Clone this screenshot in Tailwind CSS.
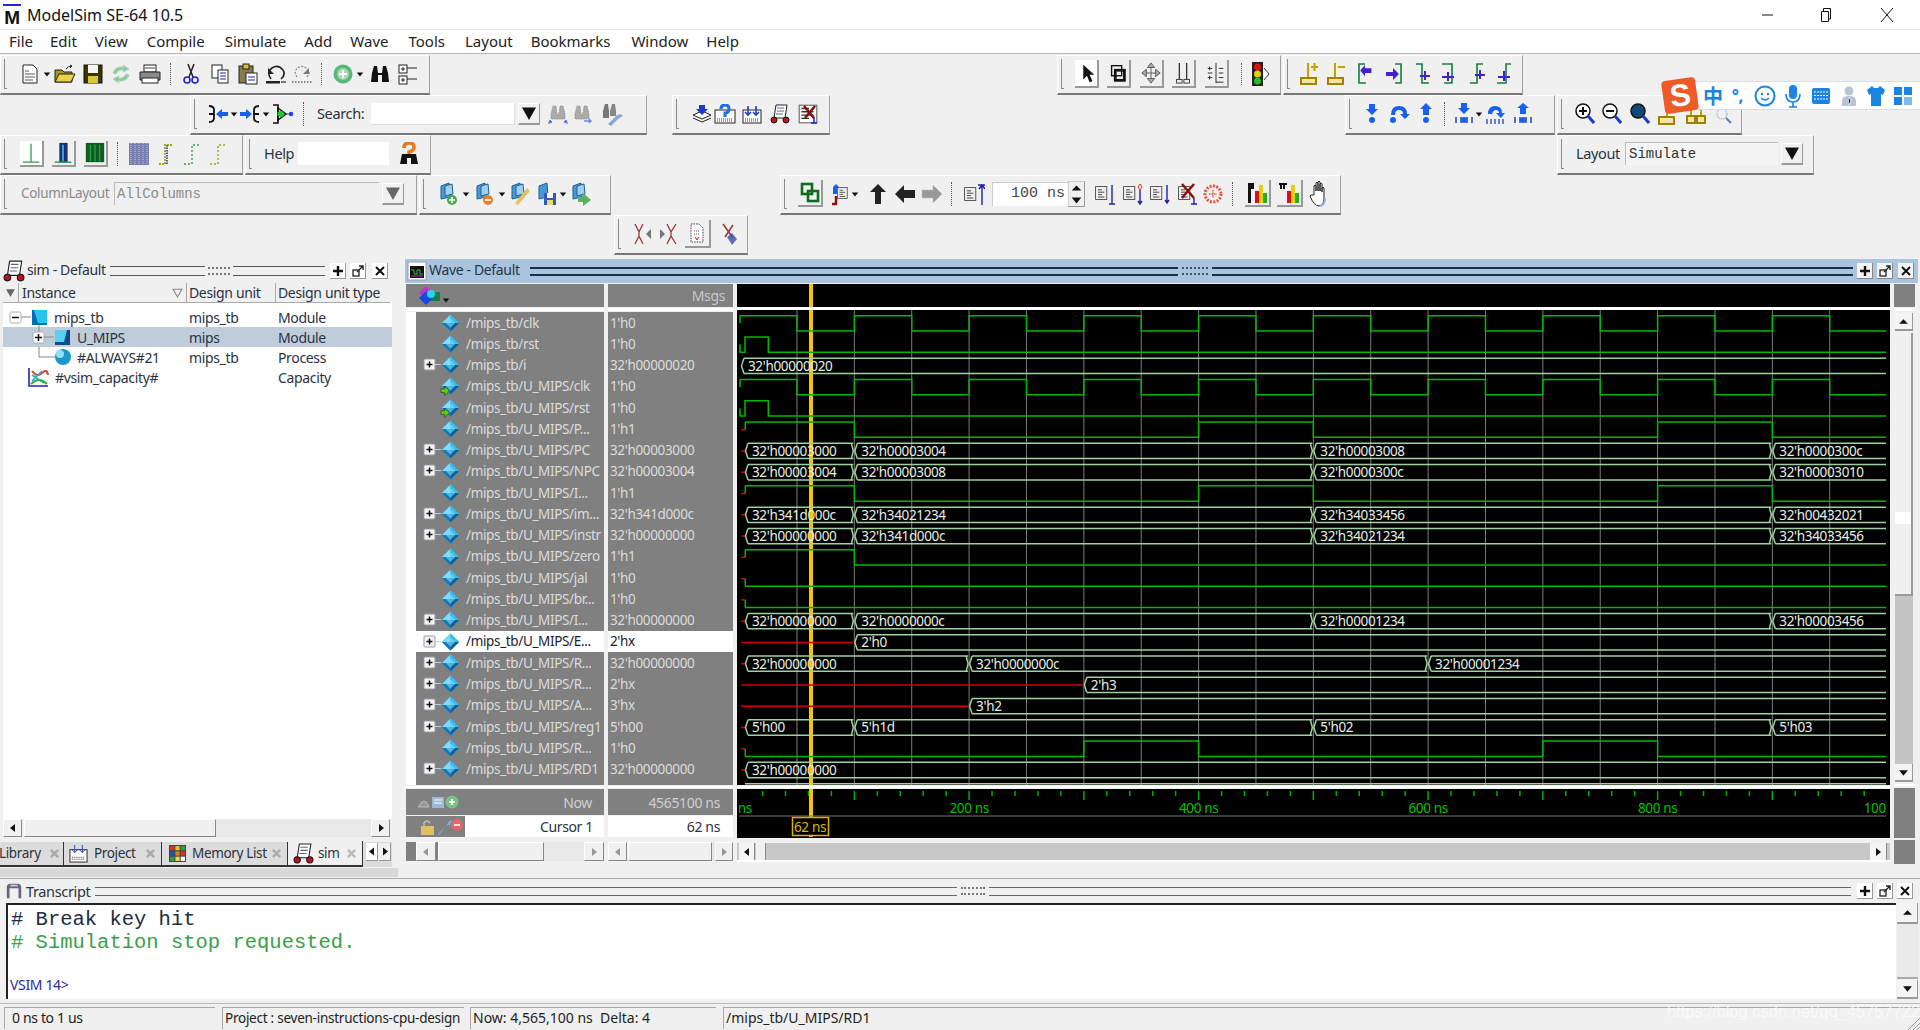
<!DOCTYPE html>
<html lang="en">
<head>
<meta charset="UTF-8" />
<title>ModelSim SE-64 10.5</title>
<script src="https://cdn.jsdelivr.net/npm/@tailwindcss/browser@4"></script>
</head>
<body class="w-[1920px] h-[1030px] overflow-hidden bg-[#f0f0f0] font-['Noto_Sans',sans-serif] text-[14px] tracking-[-0.35px] text-[#2b3240] relative">

<svg class="absolute w-0 h-0">
  <symbol id="dia" viewBox="0 0 20 20"><path d="M10 1 19 10 10 19 1 10z" fill="#1c9fdc"/><path d="M10 1 1 10h9z" fill="#7fdcf8"/><path d="M10 1 19 10h-9z" fill="#38bdf0"/><path d="M1 10 10 19v-9z" fill="#1478b8"/><path d="M19 10 10 19v-9z" fill="#0c5c9c"/><path d="M10 5 15 10 10 15 5 10z" fill="#7ee0fa" opacity=".6"/></symbol>
  <symbol id="ul" viewBox="0 0 10 10"><path d="M7 1 2 5l5 4z" fill="#111"/></symbol>
  <symbol id="ur" viewBox="0 0 10 10"><path d="M3 1l5 4-5 4z" fill="#111"/></symbol>
  <symbol id="uu" viewBox="0 0 10 10"><path d="M1 7 5 3l4 4z" fill="#111"/></symbol>
  <symbol id="ud" viewBox="0 0 10 10"><path d="M1 3h8L5 8z" fill="#111"/></symbol>
  <symbol id="plus" viewBox="0 0 12 12"><path d="M1 6h10M6 1v10" stroke="#111" stroke-width="2.4"/></symbol>
  <symbol id="float" viewBox="0 0 12 12"><rect x="1" y="5" width="6" height="6" fill="none" stroke="#222" stroke-width="1.3"/><path d="M5 7l6-6M7 1h4v4" fill="none" stroke="#222" stroke-width="1.4"/></symbol>
  <symbol id="close" viewBox="0 0 12 12"><path d="M2 2l8 8M10 2l-8 8" stroke="#111" stroke-width="2"/></symbol>
  <symbol id="wavedoc" viewBox="0 0 20 20"><rect x="2" y="2" width="16" height="16" fill="#fff" stroke="#666"/><path d="M4 5h7M4 8h11M4 11h11M4 14h7" stroke="#333" stroke-width="1.3"/></symbol>
  <symbol id="sim" viewBox="0 0 20 20"><path d="M6 1h11l-2 13H4z" fill="#fff" stroke="#222"/><path d="M7 4h7M7 7h7M6 10h7" stroke="#667"/><circle cx="4" cy="16" r="3" fill="#c01020" stroke="#111"/><circle cx="16" cy="16" r="3" fill="#c01020" stroke="#111"/></symbol>
  <symbol id="pane" viewBox="0 0 20 20"><path d="M2 18V6q0-4 4-4h8q4 0 4 4v12h-3V7H5v11z" fill="#667"/><path d="M6 4h8" stroke="#ccd" stroke-width="2"/></symbol>
  <symbol id="list" viewBox="0 0 20 20"><rect x="2" y="2" width="14" height="16" fill="#eee" stroke="#333"/><path d="M5 6h5M5 9h8M5 12h5M5 15h8" stroke="#222"/></symbol>
</svg>

<!-- title bar -->
<div class="h-[29px] bg-white flex items-center">
  <div class="ml-[3px] w-[18px] h-[22px] relative flex items-end justify-center font-bold text-[19px] leading-[17px] text-[#111] border-t-2 border-[#2222dd] font-['Liberation_Sans']">M</div>
  <span class="ml-[6px] text-[16px] tracking-normal text-[#111]">ModelSim SE-64 10.5</span>
  <div class="ml-auto flex items-center">
    <svg class="w-3 h-3" viewBox="0 0 12 12"><path d="M0 6h11" stroke="#111"/></svg>
    <svg class="ml-[46px] w-3 h-3.5" viewBox="0 0 12 14"><path d="M1.5 3.5h7v10h-7zM3.5 3V.5h7V11H9" fill="none" stroke="#111"/></svg>
    <svg class="ml-[48px] mr-[26px] w-3.5 h-3.5" viewBox="0 0 14 14"><path d="M1 0l12 14M13 0 1 14" stroke="#111"/></svg>
  </div>
</div>

<!-- menu bar -->
<div class="h-[25px] bg-white border-t border-[#e4e4e4] border-b border-b-[#b8b8b8] flex items-center text-[15px] tracking-normal leading-none text-[#222]">
  <span class="ml-[9px]">File</span><span class="ml-[17px]">Edit</span><span class="ml-[18px]">View</span><span class="ml-[19px]">Compile</span><span class="ml-[20px]">Simulate</span><span class="ml-[18px]">Add</span><span class="ml-[18px]">Wave</span><span class="ml-[20px]">Tools</span><span class="ml-[20px]">Layout</span><span class="ml-[18px]">Bookmarks</span><span class="ml-[21px]">Window</span><span class="ml-[18px]">Help</span>
</div>

<!-- toolbars -->
<div class="h-[202px] flex flex-col pt-[1px]">
  <!-- row 1 -->
  <div class="h-[40px] flex">
    <div class="w-[430px] flex items-center bg-[#f0f0f0] border border-white border-r-[#a0a0a0] border-b-[#777] border-b-2 pb-[2px]">
      <div class="ml-[3px] w-[3px] h-[30px] border-l border-b border-[#8a8a8a]"></div>
      <svg class="ml-[13px] w-5 h-5" viewBox="0 0 20 20"><path d="M3 1h10l4 4v14H3z" fill="#fff" stroke="#222"/><path d="M5 7h4M5 10h10M5 13h10M5 16h8" stroke="#556"/></svg>
      <svg class="ml-[3px] w-2 h-2" viewBox="0 0 10 10"><use href="#ud"/></svg>
      <svg class="ml-[3px] w-[22px] h-5" viewBox="0 0 22 20"><path d="M1 6h7l2 2h8v10H1z" fill="#a89818" stroke="#222"/><path d="M5 10h16l-4 8H1z" fill="#ecd048" stroke="#222"/><path d="M12 5q2-3 6-3m0 0-2-1m2 1-2 2" fill="none" stroke="#222"/></svg>
      <svg class="ml-[7px] w-5 h-5" viewBox="0 0 20 20"><rect x="1" y="1" width="18" height="18" fill="#3c3400" stroke="#111"/><rect x="5" y="1" width="10" height="8" fill="#f4f4f4"/><rect x="5" y="12" width="10" height="7" fill="#d8c830"/></svg>
      <svg class="ml-[7px] w-[22px] h-5" viewBox="0 0 22 20"><path d="M3 9q2-7 11-6l-1-2 6 4-6 3 1-2q-6-1-8 4z" fill="#8cc898" stroke="#a8d8b0"/><path d="M19 11q-2 7-11 6l1 2-6-4 6-3-1 2q6 1 8-4z" fill="#8cc898" stroke="#a8d8b0"/></svg>
      <svg class="ml-[7px] w-[22px] h-5" viewBox="0 0 22 20"><rect x="5" y="1" width="12" height="7" fill="#fff" stroke="#222"/><path d="M1 8h20v8H1z" fill="#8a8a8a" stroke="#222"/><rect x="3" y="14" width="16" height="5" fill="#fff" stroke="#222"/><path d="M6 4h10" stroke="#445"/></svg>
      <div class="ml-[9px] h-[22px] border-l border-dotted border-[#555]"></div>
      <svg class="ml-[12px] w-4 h-[22px]" viewBox="0 0 16 22"><path d="M5 1l5 13M11 1 6 14" stroke="#222" stroke-width="1.5"/><circle cx="4" cy="17" r="3" fill="none" stroke="#2222cc" stroke-width="1.6"/><circle cx="12" cy="17" r="3" fill="none" stroke="#2222cc" stroke-width="1.6"/></svg>
      <svg class="ml-[11px] w-5 h-5" viewBox="0 0 20 20"><rect x="2" y="1" width="10" height="13" fill="#fff" stroke="#222"/><rect x="8" y="6" width="10" height="13" fill="#fff" stroke="#223"/><path d="M10 9h6M10 12h6M10 15h6" stroke="#2222aa"/></svg>
      <svg class="ml-[7px] w-[22px] h-[22px]" viewBox="0 0 22 22"><rect x="2" y="3" width="14" height="17" fill="#8a7a50" stroke="#222"/><rect x="6" y="1" width="6" height="5" fill="#d8c040" stroke="#222"/><rect x="9" y="10" width="11" height="11" fill="#fff" stroke="#223"/><path d="M11 14h7M11 17h7" stroke="#2222aa"/></svg>
      <svg class="ml-[6px] w-[22px] h-5" viewBox="0 0 22 20"><path d="M6 15Q1 8 7 4t11 2q3 5-2 9" fill="none" stroke="#222" stroke-width="1.6"/><path d="M3 4v6h6z" fill="#222"/><rect x="1" y="17" width="14" height="2.5" fill="#222"/><path d="M16 18h5" stroke="#777" stroke-width="2"/></svg>
      <svg class="ml-[4px] w-[22px] h-5" viewBox="0 0 22 20"><path d="M16 13Q21 8 15 4T5 6q-2 3 1 7" fill="none" stroke="#888" stroke-width="1.2" stroke-dasharray="2 1.5"/><path d="M18 4v6h-6z" fill="#777"/><path d="M1 18h20" stroke="#888" stroke-width="2" stroke-dasharray="1.5 1.5"/></svg>
      <div class="ml-[8px] h-[22px] border-l border-dotted border-[#555]"></div>
      <svg class="ml-[11px] w-5 h-[22px]" viewBox="0 0 20 22"><circle cx="10" cy="11" r="9.5" fill="#58b878"/><circle cx="10" cy="11" r="6" fill="#a8d8b4"/><path d="M6 11h8M10 7v8" stroke="#fff" stroke-width="2"/></svg>
      <svg class="ml-[3px] w-2 h-2" viewBox="0 0 10 10"><use href="#ud"/></svg>
      <svg class="ml-[6px] w-5 h-5" viewBox="0 0 20 20"><path d="M2 9l2-7h3l1 7h4l1-7h3l2 7 1 9h-7V11H8v7H1z" fill="#111"/></svg>
      <svg class="ml-[8px] w-5 h-[22px]" viewBox="0 0 20 22"><rect x="1" y="2" width="8" height="8" fill="#fff" stroke="#222"/><rect x="1" y="13" width="8" height="8" fill="#fff" stroke="#222"/><path d="M3 6h4M5 4v4M3 17h4M5 15v4M9 5h10M9 16h10" stroke="#222"/></svg>
    </div>
    <div class="ml-[627px] w-[224px] flex items-center border border-white border-r-[#a0a0a0] border-b-[#777] border-b-2 pb-[2px]">
      <div class="ml-[3px] w-[3px] h-[30px] border-l border-b border-[#8a8a8a]"></div>
      <svg class="ml-[11px] w-6 h-7 bg-white border-r-2 border-b-2 border-[#999]" viewBox="0 0 24 28"><path d="M9 5v16l4-4 3 7 3-1-3-7h5z" fill="#111"/></svg>
      <svg class="ml-[8px] w-6 h-7 border-r-2 border-b-2 border-[#999]" viewBox="0 0 24 28"><rect x="5" y="6" width="11" height="11" fill="none" stroke="#111" stroke-width="1.5"/><rect x="9" y="11" width="10" height="11" fill="none" stroke="#111" stroke-width="3"/></svg>
      <svg class="ml-[9px] w-6 h-7 border-r-2 border-b-2 border-[#999]" viewBox="0 0 24 28"><path d="M12 3l4 5h-8zM12 25l4-5H8zM2 14l5-4v8zM22 14l-5-4v8zM12 8v12M7 14h10" fill="#aaa" stroke="#555"/></svg>
      <svg class="ml-[8px] w-6 h-7 border-r-2 border-b-2 border-[#999]" viewBox="0 0 24 28"><path d="M8 3v18M16 3v18" stroke="#333" stroke-width="1.4"/><rect x="5" y="21" width="6" height="4" fill="none" stroke="#333"/><rect x="13" y="21" width="6" height="4" fill="none" stroke="#333"/></svg>
      <svg class="ml-[9px] w-6 h-7 border-r-2 border-b-2 border-[#999]" viewBox="0 0 24 28"><path d="M3 9h5M3 14h5M3 19h5M5 7v4M5 17v4M15 9h5M15 14h5M15 19h5M12 3v22M12 24h8" stroke="#222"/></svg>
      <div class="ml-[12px] h-[22px] border-l border-dotted border-[#555]"></div>
      <svg class="ml-[8px] w-[22px] h-[26px]" viewBox="0 0 22 26"><rect x="2" y="1" width="11" height="24" fill="#222"/><circle cx="7.5" cy="6" r="3.5" fill="#e01010"/><circle cx="7.5" cy="13" r="3.5" fill="#e0d010"/><circle cx="7.5" cy="20" r="3.5" fill="#20c020"/><path d="M14 7l5 6-5 6" fill="#fff" stroke="#333"/></svg>
    </div>
    <div class="ml-[2px] w-[240px] flex items-center border border-white border-r-[#a0a0a0] border-b-[#777] border-b-2 pb-[2px]">
      <div class="ml-[3px] w-[3px] h-[30px] border-l border-b border-[#8a8a8a]"></div>
      <svg class="ml-[9px] w-5 h-6" viewBox="0 0 20 24"><path d="M9 1v16" stroke="#c8a000" stroke-width="2"/><path d="M12 5h7" stroke="#c8a000" stroke-width="2"/><path d="M15.5 1v8" stroke="#c8a000" stroke-width="2"/><rect x="2" y="16" width="15" height="6" fill="#f0e8a0" stroke="#a08000" stroke-width="2"/></svg>
      <svg class="ml-[7px] w-5 h-6" viewBox="0 0 20 24"><path d="M9 1v16" stroke="#c8a000" stroke-width="2"/><path d="M12 5h7" stroke="#c8a000" stroke-width="2"/><rect x="2" y="16" width="15" height="6" fill="#f0e8a0" stroke="#a08000" stroke-width="2"/></svg>
      <svg class="ml-[9px] w-5 h-6" viewBox="0 0 20 24"><path d="M10 2H4v19h7" fill="none" stroke="#108040" stroke-width="1.6"/><path d="M18 9H10V5l-6 7 6 7v-4h8z" transform="translate(2 -1) scale(.8)" fill="#4420d0"/></svg>
      <svg class="ml-[9px] w-5 h-6" viewBox="0 0 20 24"><path d="M11 2h6v19h-6" fill="none" stroke="#108040" stroke-width="1.6"/><path d="M2 10h7V6l6 6-6 6v-4H2z" fill="#4420d0"/></svg>
      <svg class="ml-[9px] w-5 h-6" viewBox="0 0 20 24"><path d="M3 2h6v19h7" fill="none" stroke="#108040" stroke-width="1.6"/><path d="M7 14h10M12 9v9" stroke="#4420d0" stroke-width="2"/></svg>
      <svg class="ml-[6px] w-5 h-6" viewBox="0 0 20 24"><path d="M3 2h10v19H5" fill="none" stroke="#108040" stroke-width="1.6"/><path d="M3 15h12M9 10v9" stroke="#4420d0" stroke-width="2"/></svg>
      <svg class="ml-[8px] w-5 h-6" viewBox="0 0 20 24"><path d="M16 2h-6v19H3" fill="none" stroke="#108040" stroke-width="1.6"/><path d="M8 13h10M13 8v9" stroke="#4420d0" stroke-width="2"/></svg>
      <svg class="ml-[7px] w-5 h-6" viewBox="0 0 20 24"><path d="M17 2h-5v19H3" fill="none" stroke="#108040" stroke-width="1.6"/><path d="M4 15h12M10 9v10" stroke="#4420d0" stroke-width="2"/></svg>
    </div>
  </div>
  <!-- row 2 -->
  <div class="h-[40px] flex">
    <div class="ml-[190px] w-[457px] flex items-center border border-white border-r-[#a0a0a0] border-b-[#777] border-b-2 pb-[2px]">
      <div class="ml-[3px] w-[3px] h-[30px] border-l border-b border-[#8a8a8a]"></div>
      <svg class="ml-[11px] w-5 h-5" viewBox="0 0 20 20"><path d="M1 2q5 0 5 4v8q0 4-5 4M6 10h-5" fill="none" stroke="#111" stroke-width="1.8"/><path d="M8 10l6-5v3h6v4h-6v3z" fill="#1a60f0"/></svg>
      <svg class="ml-[2px] w-2 h-2" viewBox="0 0 10 10"><use href="#ud"/></svg>
      <svg class="ml-[2px] w-5 h-5" viewBox="0 0 20 20"><path d="M19 2q-5 0-5 4v8q0 4 5 4M14 10h5" fill="none" stroke="#111" stroke-width="1.8"/><path d="M12 10l-6-5v3H0v4h6v3z" fill="#1a60f0"/></svg>
      <svg class="ml-[2px] w-2 h-2" viewBox="0 0 10 10"><use href="#ud"/></svg>
      <svg class="ml-[2px] w-[22px] h-[22px]" viewBox="0 0 22 22"><path d="M1 2h5v7M1 20h5v-7" fill="none" stroke="#111" stroke-width="1.6"/><path d="M6 5l8 6-8 6z" fill="none" stroke="#111" stroke-width="1.5"/><circle cx="9" cy="11" r="3" fill="#10d030"/><circle cx="19" cy="11" r="2.2" fill="#2040e0"/><path d="M14 11h3" stroke="#2040e0"/></svg>
      <div class="ml-[9px] h-[24px] border-l border-dotted border-[#555]"></div>
      <span class="ml-[13px] w-[47px] text-[14.5px] leading-none whitespace-nowrap">Search:</span>
      <div class="ml-[7px] w-[144px] h-[22px] bg-white border-b border-r border-[#ddd]"></div>
      <div class="ml-[3px] w-[22px] h-[22px] border border-white border-r-[#999] border-b-2 border-b-[#999] flex items-center justify-center"><svg class="w-[16px] h-[14px]" viewBox="0 0 10 10"><path d="M0 1h10L5 10z" fill="#111"/></svg></div>
      <svg class="ml-[8px] w-5 h-[22px]" viewBox="0 0 20 22"><path d="M3 11l2-8h3l1 8h2l1-8h3l2 8v5H3z" fill="#aaa" stroke="#999" stroke-dasharray="1.5 1"/><path d="M2 17l-1 3 3-1M18 17l1 3-3-1" stroke="#6888e8" stroke-width="1.5"/></svg>
      <svg class="ml-[4px] w-5 h-[22px]" viewBox="0 0 20 22"><path d="M3 11l2-8h3l1 8h2l1-8h3l2 8v5H3z" fill="#aaa" stroke="#999" stroke-dasharray="1.5 1"/><path d="M12 18h7m-2-2 2 2-2 2" fill="none" stroke="#6888e8" stroke-width="1.5"/></svg>
      <svg class="ml-[8px] w-[24px] h-[24px]" viewBox="0 0 24 24"><path d="M3 9l2-7h3l1 7v7H3z" fill="#777"/><path d="M10 9l2-7h3l1 7v5h-6z" fill="#888"/><path d="M8 22l9-9 4-1 2 2-5 3-7 7z" fill="#90a8d0"/></svg>
    </div>
    <div class="ml-[25px] w-[158px] flex items-center border border-white border-r-[#a0a0a0] border-b-[#777] border-b-2 pb-[2px]">
      <div class="ml-[3px] w-[3px] h-[30px] border-l border-b border-[#8a8a8a]"></div>
      <svg class="ml-[13px] w-5 h-5" viewBox="0 0 20 20"><path d="M1 11 10 7l9 4-9 4z" fill="#fff" stroke="#222"/><path d="M1 14l9 4 9-4" fill="none" stroke="#222"/><path d="M7 1h6v4h3l-6 6-6-6h3z" fill="#1a3cc0"/></svg>
      <svg class="ml-[2px] w-[22px] h-5" viewBox="0 0 22 20"><rect x="1" y="6" width="20" height="13" fill="#fff" stroke="#222"/><path d="M3 15h16M3 17h16" stroke="#333" stroke-dasharray="1 1"/><path d="M7 5q0-4 4-4t4 4-4 4v4" fill="none" stroke="#1a70e8" stroke-width="3"/></svg>
      <svg class="ml-[6px] w-5 h-5" viewBox="0 0 20 20"><rect x="1" y="6" width="18" height="13" fill="#fff" stroke="#222"/><path d="M3 15h14M3 17h14" stroke="#333" stroke-dasharray="1 1"/><path d="M6 2v9m-3-3 3 3 3-3M14 2v9m-3-3 3 3 3-3" fill="none" stroke="#2040c0" stroke-width="1.6"/></svg>
      <svg class="ml-[7px] w-[22px] h-5" viewBox="0 0 22 20"><use href="#sim"/></svg>
      <svg class="ml-[6px] w-[22px] h-[22px]" viewBox="0 0 22 22"><use href="#wavedoc"/><path d="M7 3l10 12M18 3 8 15" stroke="#8a1010" stroke-width="2.6"/><path d="M17 14v6m-3 0h6" stroke="#2020c0" stroke-width="1.5"/></svg>
    </div>
    <div class="ml-[515px] w-[210px] flex items-center border border-white border-r-[#a0a0a0] border-b-[#777] border-b-2 pb-[2px]">
      <div class="ml-[3px] w-[3px] h-[30px] border-l border-b border-[#8a8a8a]"></div>
      <svg class="ml-[12px] w-4 h-[22px]" viewBox="0 0 16 22"><path d="M5 1h6v5h3l-6 6-6-6h3z" fill="#1a60f0"/><circle cx="8" cy="17" r="3" fill="#1a60f0"/></svg>
      <svg class="ml-[8px] w-[24px] h-[22px]" viewBox="0 0 24 22"><path d="M3 12q0-9 8-9t8 8h3l-5 5-5-5h3q0-4-4-4t-4 5z" fill="#1a60f0"/><circle cx="5" cy="17" r="3" fill="#1a60f0"/></svg>
      <svg class="ml-[6px] w-4 h-[22px]" viewBox="0 0 16 22"><path d="M5 12h6V6h3L8 0 2 6h3z" fill="#1a60f0"/><circle cx="8" cy="17" r="3" fill="#1a60f0"/></svg>
      <div class="ml-[10px] h-[24px] border-l border-dotted border-[#555]"></div>
      <svg class="ml-[9px] w-[20px] h-[22px]" viewBox="0 0 20 22"><path d="M7 0h6v5h3l-6 6-6-6h3z" fill="#1a60f0"/><path d="M2 14v6M7 14v6M13 14v6M18 14v6" stroke="#2040c0" stroke-width="1.5"/><circle cx="10" cy="17" r="3" fill="#1a60f0"/></svg>
      <svg class="ml-[1px] w-2 h-2" viewBox="0 0 10 10"><use href="#ud"/></svg>
      <svg class="ml-[2px] w-[22px] h-[22px]" viewBox="0 0 22 22"><path d="M3 11q0-8 7-8t7 7h3l-4 5-5-5h3q0-3-3-3t-4 4z" fill="#1a60f0"/><path d="M2 16v5M6 16v5M10 16v5M14 16v5M18 16v5" stroke="#2040c0" stroke-width="1.3"/></svg>
      <svg class="ml-[6px] w-[20px] h-[22px]" viewBox="0 0 20 22"><path d="M7 11h6V5h3l-6-5-6 5h3z" fill="#1a60f0"/><path d="M2 14v6M7 14v6M13 14v6M18 14v6" stroke="#2040c0" stroke-width="1.5"/><circle cx="10" cy="17" r="3" fill="#1a60f0"/></svg>
    </div>
    <div class="ml-[2px] w-[185px] flex items-center border border-white border-r-[#a0a0a0] border-b-[#777] border-b-2 pb-[2px]">
      <div class="ml-[3px] w-[3px] h-[30px] border-l border-b border-[#8a8a8a]"></div>
      <svg class="ml-[11px] w-5 h-[22px]" viewBox="0 0 20 22"><circle cx="8" cy="8" r="7" fill="#fff" stroke="#111" stroke-width="1.5"/><path d="M4 8h8M8 4v8" stroke="#111" stroke-width="2"/><path d="M13 13l6 7" stroke="#1c3cc8" stroke-width="3"/></svg>
      <svg class="ml-[7px] w-5 h-[22px]" viewBox="0 0 20 22"><circle cx="8" cy="8" r="7" fill="#fff" stroke="#111" stroke-width="1.5"/><path d="M4 8h8" stroke="#111" stroke-width="2"/><path d="M13 13l6 7" stroke="#1c3cc8" stroke-width="3"/></svg>
      <svg class="ml-[8px] w-5 h-[22px]" viewBox="0 0 20 22"><circle cx="8" cy="8" r="7" fill="#104878" stroke="#111" stroke-width="1.5"/><path d="M13 13l6 7" stroke="#1c3cc8" stroke-width="3"/></svg>
      <svg class="ml-[7px] w-5 h-[24px]" viewBox="0 0 20 24"><path d="M10 1v15" stroke="#c8a000" stroke-width="2"/><rect x="2" y="15" width="15" height="7" fill="#f0e8a0" stroke="#a08000" stroke-width="2"/></svg>
      <svg class="ml-[9px] w-5 h-[24px]" viewBox="0 0 20 24"><path d="M5 8v6M15 8v6" stroke="#c8a000" stroke-width="2"/><rect x="1" y="14" width="8" height="7" fill="#f0e8a0" stroke="#a08000" stroke-width="2"/><rect x="11" y="14" width="8" height="7" fill="#f0e8a0" stroke="#a08000" stroke-width="2"/></svg>
      <svg class="ml-[7px] w-5 h-[24px]" viewBox="0 0 20 24"><circle cx="9" cy="12" r="5" fill="none" stroke="#8898c0" stroke-dasharray="1.500 1"/><path d="M13 16l5 5" stroke="#6078c0" stroke-width="2"/></svg>
    </div>
  </div>
  <!-- row 3 -->
  <div class="h-[40px] flex">
    <div class="w-[243px] flex items-center border border-white border-r-[#a0a0a0] border-b-[#777] border-b-2 pb-[2px]">
      <div class="ml-[3px] w-[3px] h-[30px] border-l border-b border-[#8a8a8a]"></div>
      <svg class="ml-[13px] w-6 h-[26px] bg-white border-r-2 border-b-2 border-[#999]" viewBox="0 0 24 26"><path d="M12 3v20M3 23h18" stroke="#2c9c50" stroke-width="1.4"/></svg>
      <svg class="ml-[8px] w-6 h-[26px] border-r-2 border-b-2 border-[#999]" viewBox="0 0 24 26"><rect x="8" y="2" width="9" height="21" fill="#14307c"/><rect x="11" y="4" width="2" height="18" fill="#48a8c0"/><path d="M3 23h18" stroke="#2c9c50" stroke-width="1.6"/></svg>
      <svg class="ml-[8px] w-6 h-[26px] border-r-2 border-b-2 border-[#999]" viewBox="0 0 24 26"><rect x="2" y="2" width="20" height="21" fill="#0e5c20"/><path d="M7 4v18M12 4v18M17 4v18" stroke="#28a048" stroke-width="1.5"/></svg>
      <div class="ml-[9px] h-[24px] border-l border-dotted border-[#555]"></div>
      <svg class="ml-[10px] w-[22px] h-[24px]" viewBox="0 0 22 24"><rect x="1" y="1" width="20" height="22" fill="#5058a0" opacity=".75"/><path d="M3 1v22M7 1v22M11 1v22M15 1v22M19 1v22" stroke="#c8cce0" stroke-dasharray="1 1"/></svg>
      <svg class="ml-[7px] w-5 h-[24px]" viewBox="0 0 20 24"><path d="M2 22h6V3h8" fill="none" stroke="#a0a818" stroke-width="1.8" stroke-dasharray="2 1"/><path d="M10 3v19" stroke="#5058a0" stroke-width="2" stroke-dasharray="1.5 1"/></svg>
      <svg class="ml-[5px] w-5 h-[24px]" viewBox="0 0 20 24"><path d="M2 22h8V3h8" fill="none" stroke="#38a050" stroke-width="1.4" stroke-dasharray="2 2"/></svg>
      <svg class="ml-[6px] w-5 h-[24px]" viewBox="0 0 20 24"><path d="M2 22h8V3h8" fill="none" stroke="#90a818" stroke-width="1.4" stroke-dasharray="2 2"/></svg>
    </div>
    <div class="ml-[2px] w-[186px] flex items-center border border-white border-r-[#a0a0a0] border-b-[#777] border-b-2 pb-[2px]">
      <div class="ml-[3px] w-[3px] h-[30px] border-l border-b border-[#8a8a8a]"></div>
      <span class="ml-[12px] w-[27px] text-[14.5px] leading-none">Help</span>
      <div class="ml-[7px] w-[91px] h-[23px] bg-white"></div>
      <svg class="ml-[9px] w-[22px] h-[24px]" viewBox="0 0 22 24"><path d="M2 22l2-10h14l2 10h-7v-6H9v6z" fill="#111"/><path d="M6 6q0-5 5-5t5 4-5 5v2" fill="none" stroke="#e87818" stroke-width="3.5"/></svg>
    </div>
    <div class="ml-[1126px] w-[257px] flex items-center border border-white border-r-[#a0a0a0] border-b-[#777] border-b-2 pb-[2px]">
      <div class="ml-[3px] w-[3px] h-[30px] border-l border-b border-[#8a8a8a]"></div>
      <span class="ml-[12px] w-[43px] text-[14.5px] leading-none">Layout</span>
      <div class="ml-[6px] w-[153px] h-[23px] bg-[#f4f4f4] border-t border-l border-[#bbb] flex items-center pl-[3px] font-['Liberation_Mono'] text-[14px] tracking-normal text-[#333]">Simulate</div>
      <div class="ml-[3px] w-[22px] h-[22px] border border-white border-r-[#999] border-b-2 border-b-[#999] flex items-center justify-center"><svg class="w-[16px] h-[14px]" viewBox="0 0 10 10"><path d="M0 1h10L5 10z" fill="#111"/></svg></div>
    </div>
  </div>
  <!-- row 4 -->
  <div class="h-[40px] flex">
    <div class="w-[417px] flex items-center border border-white border-r-[#a0a0a0] border-b-[#777] border-b-2 pb-[2px]">
      <div class="ml-[3px] w-[3px] h-[30px] border-l border-b border-[#8a8a8a]"></div>
      <span class="ml-[14px] w-[88px] text-[13.500px] leading-none text-[#8a8a8a] whitespace-nowrap">ColumnLayout</span>
      <div class="ml-[5px] w-[265px] h-[23px] border-t border-l border-[#bbb] flex items-center pl-[2px] font-['Liberation_Mono'] text-[14px] tracking-normal text-[#8a8a8a]">AllColumns</div>
      <div class="ml-[3px] w-[22px] h-[22px] border border-white border-r-[#999] border-b-2 border-b-[#999] flex items-center justify-center"><svg class="w-[16px] h-[14px]" viewBox="0 0 10 10"><path d="M0 1h10L5 10z" fill="#666"/></svg></div>
    </div>
    <div class="ml-[2px] w-[192px] flex items-center border border-white border-r-[#a0a0a0] border-b-[#777] border-b-2 pb-[2px]">
      <div class="ml-[3px] w-[3px] h-[30px] border-l border-b border-[#8a8a8a]"></div>
      <svg class="ml-[12px] w-[22px] h-[24px]" viewBox="0 0 22 24"><path d="M3 4l8-3 1 14-9 2z" fill="#4898d8" stroke="#206090"/><path d="M7 4l7-2 1 10-8 2z" fill="#a0d0f0" stroke="#206090"/><circle cx="14" cy="18" r="5" fill="#48a850"/><path d="M11 18h6M14 15v6" stroke="#fff" stroke-width="1.6"/></svg>
      <svg class="ml-[2px] w-2 h-2" viewBox="0 0 10 10"><use href="#ud"/></svg>
      <svg class="ml-[4px] w-[22px] h-[24px]" viewBox="0 0 22 24"><path d="M3 4l8-3 1 14-9 2z" fill="#4898d8" stroke="#206090"/><path d="M7 4l7-2 1 10-8 2z" fill="#a0d0f0" stroke="#206090"/><circle cx="14" cy="18" r="5" fill="#e88030"/><path d="M11 18h6" stroke="#fff" stroke-width="1.6"/></svg>
      <svg class="ml-[2px] w-2 h-2" viewBox="0 0 10 10"><use href="#ud"/></svg>
      <svg class="ml-[3px] w-[22px] h-[24px]" viewBox="0 0 22 24"><path d="M3 4l8-3 1 14-9 2z" fill="#4898d8" stroke="#206090"/><path d="M7 4l7-2 1 10-8 2z" fill="#a0d0f0" stroke="#206090"/><path d="M6 21 18 6l3 3L9 23z" fill="#e8c060"/></svg>
      <svg class="ml-[5px] w-[22px] h-[24px]" viewBox="0 0 22 24"><path d="M3 4l8-3 1 14-9 2z" fill="#4898d8" stroke="#206090"/><rect x="8" y="11" width="12" height="12" fill="#3058c0"/><rect x="11" y="11" width="6" height="5" fill="#fff"/><rect x="11" y="18" width="6" height="5" fill="#e8e060"/></svg>
      <svg class="ml-[1px] w-2 h-2" viewBox="0 0 10 10"><use href="#ud"/></svg>
      <svg class="ml-[3px] w-[22px] h-[24px]" viewBox="0 0 22 24"><path d="M3 4l8-3 1 14-9 2z" fill="#4898d8" stroke="#206090"/><path d="M7 4l7-2 1 10-8 2z" fill="#a0d0f0" stroke="#206090"/><path d="M8 15h5v-4l8 7-8 6v-4H8z" fill="#58b060"/></svg>
    </div>
    <div class="ml-[169px] w-[561px] flex items-center border border-white border-r-[#a0a0a0] border-b-[#777] border-b-2 pb-[2px]">
      <div class="ml-[3px] w-[3px] h-[30px] border-l border-b border-[#8a8a8a]"></div>
      <div class="ml-[11px] w-[25px] h-[27px] border-r-2 border-b-2 border-[#999] flex items-center justify-center"><svg class="w-[20px] h-[22px]" viewBox="0 0 20 22"><rect x="2" y="2" width="10" height="10" fill="none" stroke="#0e6c1c" stroke-width="2.6"/><rect x="8" y="9" width="10" height="10" fill="none" stroke="#0e6c1c" stroke-width="2.6"/></svg></div>
      <svg class="ml-[7px] w-[20px] h-[24px]" viewBox="0 0 20 24"><path d="M3 12V5l3-3 3 3H7v7" fill="#1a60f0"/><path d="M6 14v8H2" stroke="#901010" stroke-width="2.4" fill="none"/><use href="#list" x="6" y="2" width="14" height="18"/></svg>
      <svg class="ml-[1px] w-2 h-2" viewBox="0 0 10 10"><use href="#ud"/></svg>
      <svg class="ml-[9px] w-[20px] h-[24px]" viewBox="0 0 20 24"><path d="M7 22V10H2l8-8 8 8h-5v12z" fill="#222"/></svg>
      <svg class="ml-[6px] w-[22px] h-[22px]" viewBox="0 0 22 22"><path d="M21 7H10V2L1 11l9 9v-5h11z" fill="#222"/></svg>
      <svg class="ml-[5px] w-[22px] h-[22px]" viewBox="0 0 22 22"><path d="M1 7h11V2l9 9-9 9v-5H1z" fill="#999" stroke="#bbb" stroke-dasharray="1 1"/></svg>
      <div class="ml-[8px] h-[24px] border-l border-dotted border-[#555]"></div>
      <svg class="ml-[11px] w-[22px] h-[24px]" viewBox="0 0 22 24"><use href="#list" width="16" height="20" y="2"/><path d="M19 23V3m-3 4 3-4 3 4M15 3h8" fill="none" stroke="#2020a8" stroke-width="1.4"/></svg>
      <div class="ml-[7px] w-[76px] h-[24px] bg-white border-t border-l border-[#ccc] flex items-center justify-end pr-[3px] font-['Liberation_Mono'] text-[15px] tracking-normal text-[#444]">100 ns</div>
      <div class="w-[17px] h-[26px] flex flex-col border border-[#ccc] border-r-[#999] border-b-[#999]"><svg class="w-full h-[12px]" viewBox="0 0 10 10"><use href="#uu"/></svg><svg class="w-full h-[12px]" viewBox="0 0 10 10"><use href="#ud"/></svg></div>
      <svg class="ml-[9px] w-[22px] h-[24px]" viewBox="0 0 22 24"><use href="#list" width="16" height="20" y="1"/><path d="M18 3v19m-3 0h6" stroke="#2020a8" stroke-width="1.4"/></svg>
      <svg class="ml-[6px] w-[22px] h-[24px]" viewBox="0 0 22 24"><use href="#list" width="16" height="20" y="1"/><path d="M18 8v14m-2-3 2 3 2-3" fill="none" stroke="#2020a8" stroke-width="1.4"/><path d="M18 2l2 3-2 3-2-3z" fill="none" stroke="#e03030"/></svg>
      <svg class="ml-[5px] w-[22px] h-[24px]" viewBox="0 0 22 24"><use href="#list" width="16" height="20" y="1"/><path d="M18 3v18m-2-3 2 3 2-3" fill="none" stroke="#2020a8" stroke-width="1.4"/></svg>
      <svg class="ml-[6px] w-[22px] h-[24px]" viewBox="0 0 22 24"><use href="#list" width="16" height="20" y="1"/><path d="M5 2l12 14M17 2 5 16" stroke="#8a1010" stroke-width="2.4"/><path d="M17 16v6m-3 0h6" stroke="#2020a8" stroke-width="1.4"/></svg>
      <svg class="ml-[4px] w-[20px] h-[24px]" viewBox="0 0 20 24"><circle cx="10" cy="12" r="8" fill="none" stroke="#e85040" stroke-width="3" stroke-dasharray="2 1.4"/><path d="M6 12h8M10 8v8" stroke="#e85040" stroke-width="1.5" stroke-dasharray="1.5 1"/></svg>
      <div class="ml-[9px] h-[24px] border-l border-dotted border-[#555]"></div>
      <div class="ml-[12px] w-[26px] h-[27px] border-r-2 border-b-2 border-[#999] flex items-center justify-center"><svg class="w-[22px] h-[24px]" viewBox="0 0 22 24"><path d="M2 2h6v6H5v14H2z" fill="#111"/><rect x="9" y="10" width="4" height="12" fill="#e01010"/><rect x="13" y="4" width="4" height="18" fill="#e8d010"/><rect x="17" y="12" width="4" height="10" fill="#20b020"/></svg></div>
      <div class="ml-[6px] w-[26px] h-[27px] border-r-2 border-b-2 border-[#999] flex items-center justify-center"><svg class="w-[22px] h-[24px]" viewBox="0 0 22 24"><path d="M1 2h8v2h-2v4H5V4H4v4H2V4H1z" fill="#111"/><rect x="9" y="10" width="4" height="12" fill="#e01010"/><rect x="13" y="4" width="4" height="18" fill="#e8d010"/><rect x="17" y="12" width="4" height="10" fill="#20b020"/></svg></div>
      <svg class="ml-[5px] w-[22px] h-[27px]" viewBox="0 0 22 27"><path d="M6 15V6q1-2 2 0v5-8q1-2 2 0v8-9q1-2 2 0v9-7q1-2 2 0v8-4q1-2 2 0v10q0 7-5 8-5 0-9-10l1-1z" fill="#fff" stroke="#222"/><path d="M12 26q5-1 5-8" stroke="#8fb0e0" stroke-width="2" fill="none"/></svg>
    </div>
  </div>
  <!-- row 5 -->
  <div class="h-[40px] flex">
    <div class="ml-[614px] w-[134px] flex items-center border border-white border-r-[#a0a0a0] border-b-[#777] border-b-2 pb-[2px]">
      <div class="ml-[3px] w-[3px] h-[30px] border-l border-b border-[#8a8a8a]"></div>
      <svg class="ml-[12px] w-[20px] h-[24px]" viewBox="0 0 20 24"><path d="M2 2l4 8v4l-4 8M10 2 6 10v4l4 8" fill="none" stroke="#a03838" stroke-width="1.3"/><path d="M18 7l-5 5 5 5z" fill="#777"/></svg>
      <svg class="ml-[5px] w-[20px] h-[24px]" viewBox="0 0 20 24"><path d="M9 2l4 8v4l-4 8M18 2l-5 8v4l5 8" fill="none" stroke="#a03838" stroke-width="1.3"/><path d="M2 7l5 5-5 5z" fill="#777"/></svg>
      <div class="ml-[7px] w-[26px] h-[28px] border-r-2 border-b-2 border-[#999] flex items-center justify-center"><svg class="w-[20px] h-[22px]" viewBox="0 0 20 22"><path d="M4 2h8l4 4v14H4z" fill="#fff" stroke="#444" stroke-dasharray="1.5 1"/><path d="M7 9h6M7 12h6" stroke="#555" stroke-dasharray="1 1"/><path d="M8 15l2 3 2-3" stroke="#c02020" fill="none"/></svg></div>
      <svg class="ml-[8px] w-[20px] h-[24px]" viewBox="0 0 20 24"><path d="M4 2l10 14M14 3 6 15" stroke="#a03838" stroke-width="1.6"/><path d="M8 15l5-4 5 6-5 6z" fill="#3c50a8" opacity=".8"/></svg>
    </div>
  </div>
</div>

<!-- panes -->
<div class="h-[622px] flex">
  <!-- sim pane -->
  <div class="w-[396px] pt-[3px] pl-[3px] flex flex-col">
    <div class="h-[24px] w-[389px] flex items-center">
      <svg class="w-[22px] h-[22px] shrink-0" viewBox="0 0 20 20"><use href="#sim"/></svg>
      <span class="ml-[2px] w-[77px] text-[14px] leading-none whitespace-nowrap mb-[2px]">sim - Default</span>
      <div class="ml-[6px] w-[95px] h-[10px] border-t border-b border-[#555] shrink-0"></div>
      <div class="mx-[3px] w-[22px] h-[8px] border-y-2 border-dotted border-[#777]"></div>
      <div class="w-[92px] h-[10px] border-t border-b border-[#555] shrink-0"></div>
      <div class="ml-[5px] w-[16px] h-[16px] bg-white border-r border-b border-[#999] flex items-center justify-center"><svg class="w-3 h-3" viewBox="0 0 12 12"><use href="#plus"/></svg></div>
      <div class="ml-[4px] w-[16px] h-[16px] bg-white border-r border-b border-[#999] flex items-center justify-center"><svg class="w-3 h-3" viewBox="0 0 12 12"><use href="#float"/></svg></div>
      <div class="ml-[6px] w-[16px] h-[16px] bg-white border-r border-b border-[#999] flex items-center justify-center"><svg class="w-3 h-3" viewBox="0 0 12 12"><use href="#close"/></svg></div>
    </div>
    <div class="h-[20px] w-[387px] flex items-center border-b border-[#aaa] text-[14px] whitespace-nowrap">
      <div class="w-[183px] h-full flex items-center">
        <div class="w-[16px] h-full border-r border-[#aaa] flex items-center justify-center"><svg class="w-[11px] h-[11px]" viewBox="0 0 10 10"><path d="M1 2h8L5 9z" fill="#666"/></svg></div>
        <span class="ml-[3px]">Instance</span>
        <svg class="ml-auto mr-[3px] w-[11px] h-[11px]" viewBox="0 0 10 10"><path d="M1 2h8L5 9z" fill="none" stroke="#888"/></svg>
      </div>
      <div class="w-[89px] h-full border-l border-[#aaa] pl-[2px] leading-[19px]">Design unit</div>
      <div class="grow h-full border-l border-[#aaa] pl-[2px] leading-[19px]">Design unit type</div>
    </div>
    <div class="h-[516px] w-[389px] bg-white pt-[4px] text-[14px]">
      <div class="h-[20px] flex items-center">
        <svg class="w-[51px] h-[20px] shrink-0" viewBox="0 0 51 20"><rect x="7" y="5" width="11" height="11" rx="1.5" fill="#fff" stroke="#aab"/><path d="M9 10.5h7" stroke="#111" stroke-width="1.5"/><path d="M18 10h10M36 15v6" stroke="#888"/><rect x="29" y="3" width="15" height="15" fill="#0a6cb0"/><path d="M31 3h13v13H35z" fill="#28c4ec"/></svg>
        <span class="w-[135px]">mips_tb</span><span class="w-[89px]">mips_tb</span><span>Module</span>
      </div>
      <div class="h-[20px] flex items-center bg-[#bfcddb]">
        <svg class="w-[74px] h-[20px] shrink-0" viewBox="0 0 74 20"><path d="M36 0v7" stroke="#888"/><rect x="30" y="5" width="11" height="11" rx="1.5" fill="#fff" stroke="#aab"/><path d="M32 10.5h7M35.500 7v7" stroke="#111" stroke-width="1.5"/><path d="M41 10h10" stroke="#888"/><rect x="52" y="3" width="15" height="15" fill="#0a4c88"/><path d="M52 3h12l-3 12H52z" fill="#5cd0f0"/></svg>
        <span class="w-[112px]">U_MIPS</span><span class="w-[89px]">mips</span><span>Module</span>
      </div>
      <div class="h-[20px] flex items-center">
        <svg class="w-[74px] h-[20px] shrink-0" viewBox="0 0 74 20"><path d="M36 0v10h16" fill="none" stroke="#888"/><circle cx="60" cy="10" r="8" fill="#1c98c8"/><circle cx="57" cy="7" r="4" fill="#90e0f4"/></svg>
        <span class="w-[112px]">#ALWAYS#21</span><span class="w-[89px]">mips_tb</span><span>Process</span>
      </div>
      <div class="h-[20px] flex items-center">
        <svg class="w-[52px] h-[20px] shrink-0" viewBox="0 0 52 20"><path d="M26 1v18h19" fill="none" stroke="#2020c0" stroke-width="1.6"/><path d="M29 4q5 7 10 2t6 2" fill="none" stroke="#e04030" stroke-width="2"/><path d="M29 8l12 8M39 4 29 14" stroke="#30a8d0" stroke-width="1.6"/><path d="M28 17q8-8 16 0" fill="none" stroke="#30b040" stroke-width="2"/></svg>
        <span class="w-[223px]">#vsim_capacity#</span><span>Capacity</span>
      </div>
    </div>
    <!-- h scroll -->
    <div class="h-[18px] w-[387px] flex">
      <div class="w-[19px] border border-white border-r-[#888] border-b-[#888] flex items-center justify-center"><svg class="w-[10px] h-[10px]" viewBox="0 0 10 10"><use href="#ul"/></svg></div>
      <div class="ml-[2px] w-[192px] bg-[#f0f0f0] border border-white border-r-[#888] border-b-[#888]"></div>
      <div class="grow bg-[#e8e8e8]"></div>
      <div class="w-[19px] border border-white border-r-[#888] border-b-[#888] flex items-center justify-center"><svg class="w-[10px] h-[10px]" viewBox="0 0 10 10"><use href="#ur"/></svg></div>
    </div>
    <!-- tabs -->
    <div class="mt-[5px] -ml-[3px] w-[392px] h-[25px] flex text-[13.500px] bg-[#dcdcdc] whitespace-nowrap">
      <div class="w-[64px] border-b-2 border-r border-[#333] flex items-center overflow-hidden"><span class="-ml-[1px]">Library</span><svg class="ml-auto mr-[3px] w-[11px] h-[11px]" viewBox="0 0 12 12"><path d="M2 2l8 8M10 2l-8 8" stroke="#aaa" stroke-width="2.6"/></svg></div>
      <div class="w-[98px] border-b-2 border-r border-[#333] flex items-center"><svg class="ml-[5px] w-[19px] h-[19px]" viewBox="0 0 20 20"><rect x="1" y="6" width="18" height="13" fill="#fff" stroke="#222"/><path d="M3 14h14M3 16h14" stroke="#333" stroke-dasharray="1 1"/><path d="M6 1v8m-3-3 3 3 3-3M14 1v8m-3-3 3 3 3-3" fill="none" stroke="#2040c0"/></svg><span class="ml-[6px]">Project</span><svg class="ml-auto mr-[5px] w-[11px] h-[11px]" viewBox="0 0 12 12"><path d="M2 2l8 8M10 2l-8 8" stroke="#aaa" stroke-width="2.6"/></svg></div>
      <div class="w-[126px] border-b-2 border-r border-[#333] flex items-center"><svg class="ml-[7px] w-[17px] h-[17px] shrink-0" viewBox="0 0 16 16"><rect width="16" height="16" fill="#444"/><rect x="1" y="1" width="4" height="4" fill="#e03020"/><rect x="6" y="1" width="4" height="4" fill="#f0c020"/><rect x="11" y="1" width="4" height="4" fill="#30a040"/><rect x="1" y="6" width="4" height="4" fill="#2050d0"/><rect x="6" y="6" width="4" height="4" fill="#e08020"/><rect x="11" y="6" width="4" height="4" fill="#e03020"/><rect x="1" y="11" width="4" height="4" fill="#30a040"/><rect x="6" y="11" width="4" height="4" fill="#f0e040"/><rect x="11" y="11" width="4" height="4" fill="#fff"/></svg><span class="ml-[6px]">Memory List</span><svg class="ml-auto mr-[5px] w-[11px] h-[11px] shrink-0" viewBox="0 0 12 12"><path d="M2 2l8 8M10 2l-8 8" stroke="#aaa" stroke-width="2.6"/></svg></div>
      <div class="w-[75px] bg-[#f0f0f0] border-b-2 border-r border-[#333] -mt-[1px] flex items-center"><svg class="ml-[5px] w-[21px] h-[21px]" viewBox="0 0 20 20"><use href="#sim"/></svg><span class="ml-[4px]">sim</span><svg class="ml-auto mr-[5px] w-[11px] h-[11px]" viewBox="0 0 12 12"><path d="M2 2l8 8M10 2l-8 8" stroke="#bbb" stroke-width="2.6"/></svg></div>
      <div class="ml-[3px] flex bg-[#f0f0f0] h-[18px] self-start mt-[1px]"><div class="w-[12px] border-r border-b border-[#999] bg-white flex items-center justify-center"><svg class="w-[10px] h-[11px]" viewBox="0 0 10 10"><use href="#ul"/></svg></div><div class="ml-[1px] w-[12px] border-r border-b border-[#999] flex items-center justify-center"><svg class="w-[10px] h-[11px]" viewBox="0 0 10 10"><use href="#ur"/></svg></div></div>
    </div>
    <div class="-ml-[3px] mt-[1px] h-[9px] w-[398px] bg-[#d8d8d8]"></div>
  </div>

  <!-- wave pane -->
  <div class="ml-[7px] w-[1515px] pt-[3px] pl-[2px] flex flex-col bg-[#f0f0f0]">
    <div class="h-[24px] w-[1513px] bg-[#a9c4dc] flex items-center">
      <svg class="ml-[2px] w-[20px] h-[20px] shrink-0" viewBox="0 0 20 20"><rect x="1" y="1" width="18" height="18" fill="#fff" stroke="#99a"/><rect x="3" y="5" width="14" height="12" fill="#111"/><path d="M4 9h3v4h3V9h3v4h3" fill="none" stroke="#30c030"/><path d="M4 15h12" stroke="#c030c0"/></svg>
      <span class="ml-[2px] w-[95px] text-[14px] leading-none text-[#263448] whitespace-nowrap mb-[2px]">Wave - Default</span>
      <div class="ml-[6px] w-[648px] h-[9px] border-y-2 border-[#1c3048] shrink-0"></div>
      <div class="mx-[4px] w-[26px] h-[8px] border-y-2 border-dotted border-[#456] shrink-0"></div>
      <div class="w-[641px] h-[9px] border-y-2 border-[#1c3048] shrink-0"></div>
      <div class="ml-[4px] w-[16px] h-[16px] bg-[#f4f4f4] border-r border-b border-[#888] flex items-center justify-center shrink-0"><svg class="w-3 h-3" viewBox="0 0 12 12"><use href="#plus"/></svg></div>
      <div class="ml-[4px] w-[16px] h-[16px] bg-[#f4f4f4] border-r border-b border-[#888] flex items-center justify-center shrink-0"><svg class="w-3 h-3" viewBox="0 0 12 12"><use href="#float"/></svg></div>
      <div class="ml-[5px] w-[16px] h-[16px] bg-[#f4f4f4] border-r border-b border-[#888] flex items-center justify-center shrink-0"><svg class="w-3 h-3" viewBox="0 0 12 12"><use href="#close"/></svg></div>
    </div>
    <div class="mt-[1px] flex">
      <!-- names -->
      <div class="ml-[1px] w-[198px] flex flex-col">
        <div class="h-[23px] bg-[#808080] flex items-center pl-[12px]">
          <svg class="w-[24px] h-[20px]" viewBox="0 0 24 20"><path d="M8 0l7 7-7 6-7-6z" fill="#c030d0"/><rect x="12" y="6" width="10" height="9" fill="#108048"/><path d="M8 5l7 7-7 7-7-7z" fill="#1448e0"/><circle cx="13" cy="8" r="4" fill="#30d0e8"/></svg>
          <svg class="w-[8px] h-[8px] mt-[8px]" viewBox="0 0 10 10"><use href="#ud"/></svg>
        </div>
        <div class="h-[3px] bg-white mt-[1px]"></div>
        <div id="names" class="h-[473px] mt-[1px] bg-[#808080] border-l-[10px] border-white text-[13.500px]"></div>
        <div class="h-[4px]"><div class="h-[2px] mt-[1px] bg-white"></div></div>
        <div class="h-[26px] bg-[#808080] flex items-center text-[#d0d0d0] text-[14px]">
          <svg class="ml-[11px] w-[44px] h-[16px]" viewBox="0 0 44 16"><path d="M2 12q4-8 8-3l2 4H1z" fill="#999" stroke="#bbb"/><rect x="15" y="3" width="12" height="11" fill="#9fb8d8"/><path d="M17 6h8M17 9h8" stroke="#fff"/><circle cx="35" cy="8" r="6.500" fill="#7cc088"/><path d="M32 8h6M35 5v6" stroke="#fff" stroke-width="1.600"/></svg>
          <span class="ml-auto mr-[12px]">Now</span>
        </div>
        <div class="h-[21px] mt-[1px] bg-[#808080] flex items-center">
          <svg class="ml-[13px] w-[46px] h-[18px] shrink-0" viewBox="0 0 46 18"><rect x="2" y="8" width="13" height="9" fill="#e0c060"/><path d="M5 8V5q3-4 6 0" fill="none" stroke="#bbb" stroke-width="1.6"/><path d="M19 16l9-9 2-4 3-1-2 5-4 1-7 9z" fill="#88a8e0"/><circle cx="38" cy="7" r="6" fill="#e06868"/><path d="M35 7h6" stroke="#fff" stroke-width="1.600"/></svg>
          <div class="h-full grow bg-white flex items-center justify-end pr-[11px] text-[14px]">Cursor 1</div>
        </div>
        <div class="h-[5px]"></div>
        <div class="h-[19px] flex bg-[#808080]">
          <div class="ml-[10px] w-[20px] bg-[#f0f0f0] border border-white border-r-[#888] border-b-[#888] flex items-center justify-center"><svg class="w-[10px] h-[10px] opacity-40" viewBox="0 0 10 10"><use href="#ul"/></svg></div>
          <div class="ml-[2px] w-[106px] bg-[#f0f0f0] border border-white border-r-[#888] border-b-[#888]"></div>
          <div class="grow bg-[#e8e8e8]"></div>
          <div class="w-[20px] bg-[#f0f0f0] border border-white border-r-[#888] border-b-[#888] flex items-center justify-center"><svg class="w-[10px] h-[10px] opacity-40" viewBox="0 0 10 10"><use href="#ur"/></svg></div>
        </div>
      </div>
      <!-- values -->
      <div class="ml-[4px] w-[125px] flex flex-col">
        <div class="h-[23px] bg-[#808080] flex items-center justify-end pr-[8px] text-[14px] text-[#c8c8c8]">Msgs</div>
        <div class="h-[3px] bg-white mt-[1px]"></div>
        <div id="values" class="h-[473px] mt-[1px] bg-[#808080] text-[13.500px]"></div>
        <div class="h-[4px]"><div class="h-[2px] mt-[1px] bg-white"></div></div>
        <div class="h-[26px] bg-[#808080] flex items-center justify-end pr-[13px] text-[14px] text-[#d0d0d0]">4565100 ns</div>
        <div class="h-[21px] mt-[1px] bg-white flex items-center justify-end pr-[13px] text-[14px]">62 ns</div>
        <div class="h-[5px]"></div>
        <div class="h-[19px] flex">
          <div class="w-[19px] border border-white border-r-[#888] border-b-[#888] flex items-center justify-center"><svg class="w-[10px] h-[10px] opacity-40" viewBox="0 0 10 10"><use href="#ul"/></svg></div>
          <div class="ml-[1px] w-[84px] border border-white border-r-[#888] border-b-[#888]"></div>
          <div class="grow bg-[#e8e8e8]"></div>
          <div class="w-[18px] border border-white border-r-[#888] border-b-[#888] flex items-center justify-center"><svg class="w-[10px] h-[10px] opacity-40" viewBox="0 0 10 10"><use href="#ur"/></svg></div>
        </div>
      </div>
      <!-- wave canvas -->
      <div class="ml-[4px] w-[1153px] flex flex-col">
        <svg id="wave" class="block w-[1153px] h-[554px]" viewBox="737 284 1153 554"></svg>
        <div class="h-[5px]"></div>
        <div class="h-[19px] flex bg-[#c8c8c8] border-b-2 border-white">
          <div class="ml-[2px] w-[16px] bg-[#f4f4f4] border-r border-[#888] flex items-center justify-center"><svg class="w-[10px] h-[10px]" viewBox="0 0 10 10"><use href="#ul"/></svg></div>
          <div class="ml-[1px] w-[10px] bg-[#f0f0f0] border-r border-[#888]"></div>
          <div class="grow"></div>
          <div class="w-[17px] mr-[3px] bg-[#f4f4f4] border-r border-[#888] flex items-center justify-center"><svg class="w-[10px] h-[10px]" viewBox="0 0 10 10"><use href="#ur"/></svg></div>
        </div>
      </div>
      <!-- v scroll -->
      <div class="ml-[4px] w-[21px] flex flex-col">
        <div class="h-[23px] bg-[#808080]"></div>
        <div class="h-[3px] bg-white mt-[1px]"></div>
        <div class="h-[2px]"></div>
        <div class="h-[18px] ml-[1px] w-[18px] bg-[#f4f4f4] border-b-2 border-r border-[#999] flex items-center justify-center"><svg class="w-[11px] h-[11px]" viewBox="0 0 10 10"><use href="#uu"/></svg></div>
        <div class="mt-[2px] ml-[1px] w-[18px] h-[263px] bg-[#f0f0f0] border-b-2 border-r-2 border-[#999] pt-[179px]"><div class="h-[12px] bg-white"></div></div>
        <div class="ml-[1px] w-[18px] h-[168px] bg-[#c4c4c4]"></div>
        <div class="h-[18px] ml-[1px] w-[18px] bg-[#f4f4f4] border-b-2 border-r border-[#999] flex items-center justify-center"><svg class="w-[11px] h-[11px]" viewBox="0 0 10 10"><use href="#ud"/></svg></div>
        <div class="h-[6px]"><div class="h-[2px] mt-[2px] bg-white"></div></div>
        <div class="h-[50px] bg-[#808080]"></div>
        <div class="h-[2px]"></div>
        <div class="h-[24px] bg-[#808080]"></div>
      </div>
    </div>
  </div>
</div>

<!-- transcript -->
<div class="h-[125px] flex flex-col border-t border-[#aaa]">
  <div class="h-[24px] flex items-center pl-[5px]">
    <svg class="w-[18px] h-[18px] shrink-0" viewBox="0 0 20 20"><use href="#pane"/></svg>
    <span class="ml-[3px] w-[60px] text-[14.500px] leading-none whitespace-nowrap">Transcript</span>
    <div class="ml-[9px] w-[862px] h-[9px] border-y border-[#666] shrink-0"></div>
    <div class="mx-[4px] w-[24px] h-[8px] border-y-2 border-dotted border-[#777] shrink-0"></div>
    <div class="w-[862px] h-[9px] border-y border-[#666] shrink-0"></div>
    <div class="ml-[6px] w-[16px] h-[16px] bg-white border-r border-b border-[#999] flex items-center justify-center shrink-0"><svg class="w-3 h-3" viewBox="0 0 12 12"><use href="#plus"/></svg></div>
    <div class="ml-[4px] w-[16px] h-[16px] bg-white border-r border-b border-[#999] flex items-center justify-center shrink-0"><svg class="w-3 h-3" viewBox="0 0 12 12"><use href="#float"/></svg></div>
    <div class="ml-[4px] w-[16px] h-[16px] bg-white border-r border-b border-[#999] flex items-center justify-center shrink-0"><svg class="w-3 h-3" viewBox="0 0 12 12"><use href="#close"/></svg></div>
  </div>
  <div class="flex h-[96px]">
    <div class="ml-[6px] w-[1890px] bg-white border-t-2 border-l-2 border-[#222] pl-[3px] pt-[3px] font-['Liberation_Mono'] text-[20.500px] tracking-normal leading-[23px]">
      <div class="text-[#222a44]"># Break key hit</div>
      <div class="text-[#3aa048]"># Simulation stop requested.</div>
      <div class="mt-[22px] font-['Noto_Sans'] text-[14px] leading-[18px] tracking-[-0.35px] text-[#2a2aa0] -ml-[1px]">VSIM 14&gt;</div>
    </div>
    <div class="ml-[1px] w-[21px] flex flex-col">
      <div class="h-[21px] bg-[#f4f4f4] border-b-2 border-r border-[#999] flex items-center justify-center"><svg class="w-[11px] h-[11px]" viewBox="0 0 10 10"><use href="#uu"/></svg></div>
      <div class="grow bg-[#eaeaea] border-b-2 border-[#aaa]"></div>
      <div class="mt-[1px] h-[19px] bg-[#f4f4f4] border-b-2 border-r border-[#999] flex items-center justify-center"><svg class="w-[11px] h-[11px]" viewBox="0 0 10 10"><use href="#ud"/></svg></div>
    </div>
  </div>
</div>

<!-- status bar -->
<div class="h-[27px] flex pt-[3px] border-t border-[#bbb] text-[14px] text-[#222] whitespace-nowrap">
  <div class="ml-[4px] w-[211px] h-[22px] border-t border-l border-[#a8a8a8] pl-[7px] leading-[20px]">0 ns to 1 us</div>
  <div class="ml-[7px] w-[242px] h-[22px] border-t border-l border-[#a8a8a8] pl-[2px] leading-[20px] text-[13.500px] tracking-[-0.250px]">Project : seven-instructions-cpu-design</div>
  <div class="ml-[6px] w-[246px] h-[22px] border-t border-l border-[#a8a8a8] pl-[2px] leading-[20px] tracking-normal">Now: 4,565,100 ns &nbsp;Delta: 4</div>
  <div class="ml-[7px] grow h-[22px] border-t border-l border-[#a8a8a8] pl-[2px] leading-[20px] tracking-normal">/mips_tb/U_MIPS/RD1</div>
</div>

<!-- sogou IME floating bar -->
<div class="absolute left-[1663px] top-[79px] flex items-center">
  <div class="w-[34px] h-[33px] rotate-[-8deg] rounded-[4px] bg-[#ee5a28] flex items-center justify-center text-white font-bold text-[31px] leading-none font-['Liberation_Sans'] z-10">S</div>
  <div class="-ml-[4px] w-[227px] h-[29px] bg-white border-y border-[#d8dce8] flex items-center text-[#1a84e0]">
    <span class="ml-[10px] text-[20px] leading-none font-['Noto_Sans_CJK_SC'] font-bold">中</span>
    <span class="ml-[9px] text-[17px] font-bold leading-none">°,</span>
    <svg class="ml-[11px] w-[22px] h-[22px]" viewBox="0 0 22 22"><circle cx="11" cy="11" r="9.500" fill="#fff" stroke="#1a84e0" stroke-width="2"/><circle cx="8" cy="9" r="1.200" fill="#1a84e0"/><circle cx="14" cy="9" r="1.200" fill="#1a84e0"/><path d="M7 13q4 4 8 0" fill="none" stroke="#1a84e0" stroke-width="1.500"/></svg>
    <svg class="ml-[8px] w-[18px] h-[24px]" viewBox="0 0 18 24"><rect x="5" y="1" width="8" height="14" rx="4" fill="#1a84e0"/><path d="M2 10q0 8 7 8t7-8M9 18v5M5 23h8" fill="none" stroke="#1a84e0" stroke-width="1.600"/></svg>
    <svg class="ml-[9px] w-[20px] h-[18px]" viewBox="0 0 20 18"><rect x="1" y="1" width="18" height="16" rx="2" fill="#1a84e0"/><path d="M3 5h14M3 8.500h14M3 12h14" stroke="#fff" stroke-dasharray="2 1"/></svg>
    <svg class="ml-[9px] w-[18px] h-[22px]" viewBox="0 0 18 22"><circle cx="9" cy="6" r="4.500" fill="#b8c4d4"/><path d="M2 21v-5q0-5 7-5t7 5v5z" fill="#b8c4d4"/><path d="M9 12l2 4-2 4" stroke="#fff"/></svg>
    <svg class="ml-[8px] w-[20px] h-[22px]" viewBox="0 0 20 22"><path d="M6 1 1 5l2 5 2-1v12h10V9l2 1 2-5-5-4-2 2H8z" fill="#1a84e0"/></svg>
    <svg class="ml-[7px] w-[20px] h-[20px]" viewBox="0 0 20 20"><rect x="1" y="1" width="8" height="8" fill="#1a84e0"/><rect x="11" y="1" width="8" height="8" fill="#1a84e0"/><rect x="1" y="11" width="8" height="8" fill="#1a84e0"/><rect x="11" y="11" width="8" height="8" fill="#7cb8ec"/></svg>
  </div>
</div>

<!-- watermark -->
<div class="absolute left-[1667px] top-[999px] font-['Liberation_Sans'] text-[16.500px] tracking-normal text-white/70">https://blog.csdn.net/qq_45757722</div>
<svg class="absolute right-0 bottom-0 w-[14px] h-[14px]" viewBox="0 0 14 14"><path d="M14 2 2 14M14 7l-7 7M14 11l-3 3" stroke="#999"/></svg>

<script>
  // signal table: name, value, expandable, kind of marker
  const signals = [
    ["/mips_tb/clk", "1'h0"], ["/mips_tb/rst", "1'h0"], ["/mips_tb/i", "32'h00000020", 1],
    ["/mips_tb/U_MIPS/clk", "1'h0", 0, 1], ["/mips_tb/U_MIPS/rst", "1'h0", 0, 1], ["/mips_tb/U_MIPS/P...", "1'h1"],
    ["/mips_tb/U_MIPS/PC", "32'h00003000", 1], ["/mips_tb/U_MIPS/NPC", "32'h00003004", 1], ["/mips_tb/U_MIPS/I...", "1'h1"],
    ["/mips_tb/U_MIPS/im...", "32'h341d000c", 1], ["/mips_tb/U_MIPS/instr", "32'h00000000", 1], ["/mips_tb/U_MIPS/zero", "1'h1"],
    ["/mips_tb/U_MIPS/jal", "1'h0"], ["/mips_tb/U_MIPS/br...", "1'h0"], ["/mips_tb/U_MIPS/I...", "32'h00000000", 1],
    ["/mips_tb/U_MIPS/E...", "2'hx", 1], ["/mips_tb/U_MIPS/R...", "32'h00000000", 1], ["/mips_tb/U_MIPS/R...", "2'hx", 1],
    ["/mips_tb/U_MIPS/A...", "3'hx", 1], ["/mips_tb/U_MIPS/reg1", "5'h00", 1], ["/mips_tb/U_MIPS/R...", "1'h0"],
    ["/mips_tb/U_MIPS/RD1", "32'h00000000", 1]
  ];
  const SEL = 15;
  let namesHtml = "", valuesHtml = "";
  signals.forEach((s, i) => {
    const sel = i === SEL;
    const box = s[2]
      ? `<svg class="w-[29px] h-[20px] shrink-0" viewBox="0 0 29 20"><rect x="8" y="4" width="11" height="11" rx="1" fill="#f4f4f4" stroke="#99a"/><path d="M10.500 9.500h6M13.500 6.500v6" stroke="#111" stroke-width="1.500"/><path d="M19 9.500h6" stroke="#ccc"/></svg>`
      : `<div class="w-[29px] shrink-0"></div>`;
    const arrow = s[3] ? `<path d="M0 16h4v-3l5 5-5 5v-3H0z" fill="#58d010" stroke="#111" stroke-width=".5" transform="translate(0 -3)"/>` : "";
    namesHtml += `<div class="h-[21.270px] flex items-center ${sel ? "bg-white text-[#1a2030]" : "text-[#dcdcdc]"}">
      ${box}<svg class="w-[19px] h-[20px] -ml-[4px] mr-[10px] shrink-0 overflow-visible" viewBox="0 0 20 20"><use href="#dia"/>${arrow}</svg>
      <span class="whitespace-nowrap -ml-[4px]">${s[0]}</span></div>`;
    valuesHtml += `<div class="h-[21.270px] flex items-center pl-[2px] ${sel ? "bg-white text-[#1a2030]" : "text-[#dcdcdc]"}">${s[1]}</div>`;
  });
  document.getElementById("names").innerHTML = namesHtml;
  document.getElementById("values").innerHTML = valuesHtml;

  // waveform canvas, page coordinates
  const X = t => 739.6 + 1.1475 * t;
  const END = 1886;
  const high = i => 315.7 + 21.27 * i;
  const low = i => high(i) + 15.3;
  const mid = i => high(i) + 7.65;
  const GREEN = "#00b800", BUS = "#9fd0a0", RED = "#d40000";
  let svg = `<defs><clipPath id="cl"><rect x="739" y="284" width="1147" height="554"/></clipPath></defs>`;
  svg += `<rect x="737" y="284" width="1153" height="554" fill="#000"/>`;
  const line = (d, c, w = 1.5) => `<path d="${d}" fill="none" stroke="${c}" stroke-width="${w}"/>`;
  const txt = (x, y, t, c = "#e6f0e6", anchor = "start") =>
    `<text x="${x}" y="${y}" fill="${c}" text-anchor="${anchor}" font-family="Noto Sans" font-size="13.500" letter-spacing="-0.35">${t}</text>`;

  // grid lines every 50 ns
  for (let t = 50; t < 1000; t += 50) svg += line(`M${X(t)} 310V787`, "#7c7c7c", 1);
  // cursor under the traces
  svg += `<rect x="809" y="284" width="4" height="23" fill="#f4c400"/><rect x="809" y="310" width="4" height="527" fill="#f4c400"/>`;

  const level = (i, t0, edges, start) => {
    // edges: times where the level flips
    let v = start, x = X(t0);
    let d = `M${x} ${v ? high(i) : low(i)}`;
    edges.forEach(t => {
      d += `H${X(t)}`; v = !v; d += `V${v ? high(i) : low(i)}`;
    });
    return line(d + `H${END}`, GREEN);
  };
  const clock = []; for (let t = 50; t < 1000; t += 50) clock.push(t);
  const stub = (i, dir) => line(`M741 ${mid(i)}H745`, RED) + line(`M745.300 ${mid(i)}V${dir > 0 ? high(i) : low(i)}`, GREEN);
  const bus = (i, segs) => {
    let out = "";
    segs.forEach((s, k) => {
      const a = X(s[0]);
      const b = k + 1 < segs.length ? X(segs[k + 1][0]) - 1 : END;
      const t = high(i), m = mid(i), u = low(i);
      out += line(`M${a + 3} ${t}H${b}M${a + 3} ${u}H${b}M${a + 3} ${t}L${a + 0.500} ${m}L${a + 3} ${u}`, BUS);
      if (b < END) out += line(`M${b - 2} ${t}L${b} ${m}L${b - 2} ${u}`, BUS);
      out += txt(a + 7, m + 5, s[1]);
    });
    return out;
  };
  const T5 = 4.700;
  svg += line(`M740 ${mid(0)}V${high(0)}`, GREEN) + level(0, 0, clock, true);
  svg += line(`M740 ${mid(1)}V${low(1)}`, GREEN) + level(1, 0, [T5, 25], false);
  svg += bus(2, [[1.200, "32'h00000020"]]);
  svg += line(`M740 ${mid(3)}V${high(3)}`, GREEN) + level(3, 0, clock, true);
  svg += line(`M740 ${mid(4)}V${low(4)}`, GREEN) + level(4, 0, [T5, 25], false);
  svg += stub(5, 1) + level(5, T5, [100, 400, 500, 800, 900], true);
  svg += line(`M741 ${mid(6)}H745`, RED) + bus(6, [[T5, "32'h00003000"], [100, "32'h00003004"], [500, "32'h00003008"], [900, "32'h0000300c"]]);
  svg += line(`M741 ${mid(7)}H745`, RED) + bus(7, [[T5, "32'h00003004"], [100, "32'h00003008"], [500, "32'h0000300c"], [900, "32'h00003010"]]);
  svg += stub(8, 1) + level(8, T5, [100, 400, 500, 800, 900], true);
  svg += line(`M741 ${mid(9)}H745`, RED) + bus(9, [[T5, "32'h341d000c"], [100, "32'h34021234"], [500, "32'h34033456"], [900, "32'h00432021"]]);
  svg += line(`M741 ${mid(10)}H745`, RED) + bus(10, [[T5, "32'h00000000"], [100, "32'h341d000c"], [500, "32'h34021234"], [900, "32'h34033456"]]);
  svg += stub(11, 1) + level(11, T5, [100], true);
  svg += stub(12, -1) + level(12, T5, [], false);
  svg += stub(13, -1) + level(13, T5, [], false);
  svg += line(`M741 ${mid(14)}H745`, RED) + bus(14, [[T5, "32'h00000000"], [100, "32'h0000000c"], [500, "32'h00001234"], [900, "32'h00003456"]]);
  svg += line(`M741 ${mid(15)}H853`, RED) + bus(15, [[100, "2'h0"]]);
  svg += line(`M741 ${mid(16)}H745`, RED) + bus(16, [[T5, "32'h00000000"], [200, "32'h0000000c"], [600, "32'h00001234"]]);
  svg += line(`M741 ${mid(17)}H1084`, RED) + bus(17, [[300, "2'h3"]]);
  svg += line(`M741 ${mid(18)}H968`, RED) + bus(18, [[200, "3'h2"]]);
  svg += line(`M741 ${mid(19)}H745`, RED) + bus(19, [[T5, "5'h00"], [100, "5'h1d"], [500, "5'h02"], [900, "5'h03"]]);
  svg += stub(20, -1) + level(20, T5, [300, 400, 700, 800], false);
  svg += line(`M741 ${mid(21)}H745`, RED) + bus(21, [[T5, "32'h00000000"]]);
  svg += line(`M745 ${high(22)}H${END}`, BUS);

  // separators
  svg += `<rect x="737" y="307" width="1153" height="3" fill="#fff"/><rect x="737" y="785" width="1153" height="4" fill="#f0f0f0"/><rect x="737" y="786" width="1153" height="2" fill="#fff"/>`;
  svg += `<rect x="809" y="789" width="4" height="28" fill="#f4c400"/>`;

  // time axis
  let ticks = "";
  for (let t = 20; t < 1000; t += 20) {
    const major = t % 100 === 0;
    ticks += line(`M${X(t)} 791V${major ? 800 : 796}`, "#00b000", 1.500);
  }
  svg += ticks;
  svg += `<g clip-path="url(#cl)">`;
  for (let t = 0; t <= 1000; t += 200) svg += txt(X(t), 813, `${t} ns`, "#00c000", "middle");
  svg += `</g>`;
  svg += line("M739 816H1886", "#777", 1);
  svg += `<rect x="792.500" y="817.500" width="36" height="18" fill="#000" stroke="#d8b000" stroke-width="1.500"/>`;
  svg += txt(794, 832, "62 ns", "#d8b800");
  document.getElementById("wave").innerHTML = svg;
</script>
</body>
</html>
